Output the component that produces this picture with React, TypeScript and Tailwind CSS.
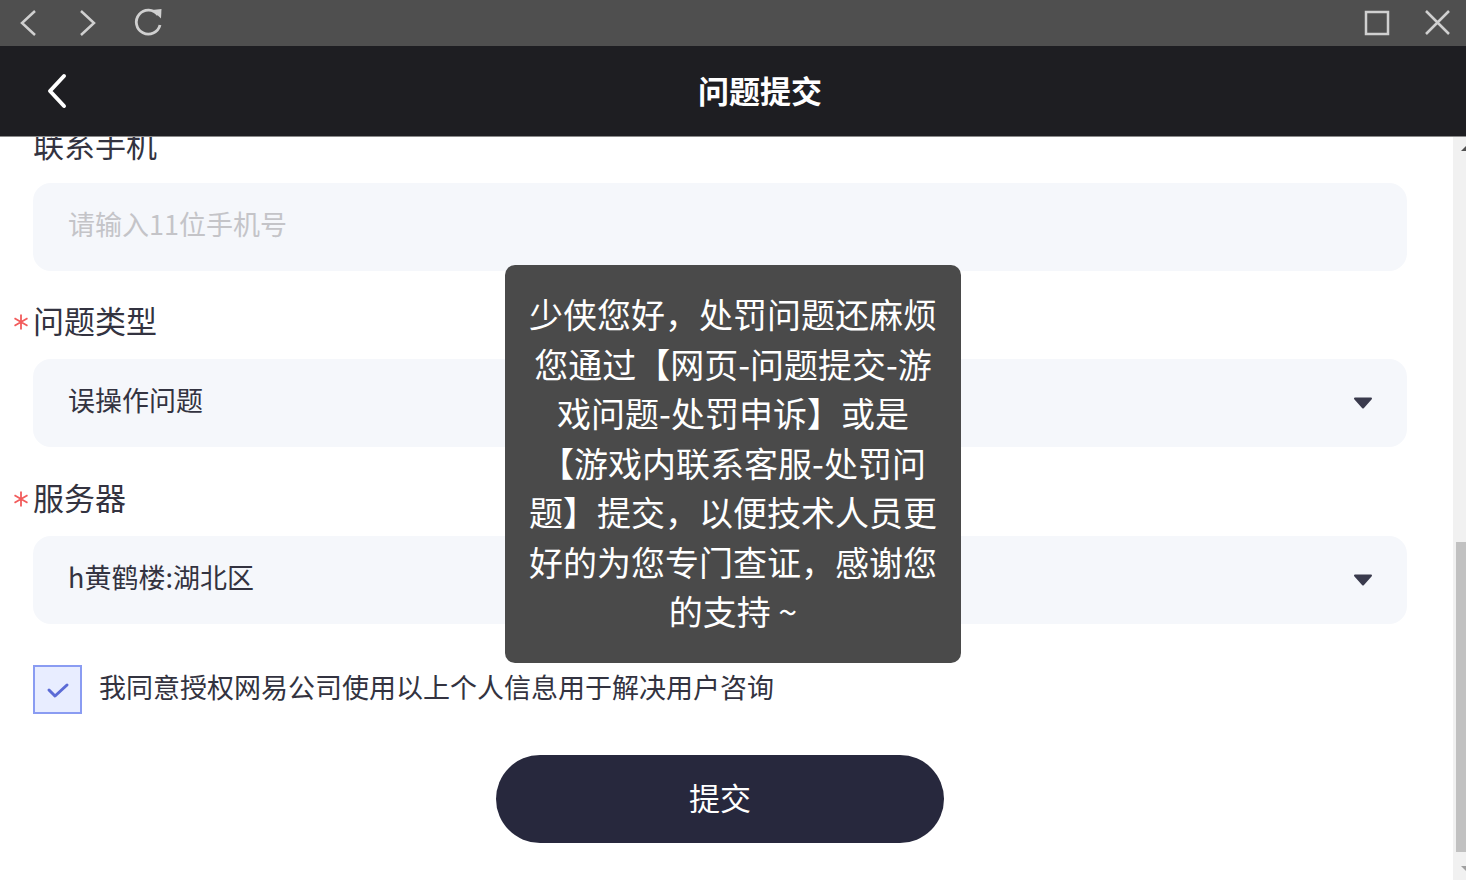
import React from "react";

const font = { fontFamily: '"Noto Sans CJK SC", "Noto Sans", sans-serif' };

function Caret() {
  return (
    <svg width="20" height="12" viewBox="0 0 20 12">
      <path d="M2 1.5 L18 1.5 L10 10.5 Z" fill="#3a3b4d" stroke="#3a3b4d" strokeWidth="2" strokeLinejoin="round" />
    </svg>
  );
}

function Label({ text, required }: { text: string; required?: boolean }) {
  return (
    <div className="flex items-center h-[44px] text-[31px] leading-[44px] text-[#333340]">
      {required && (
        <svg width="20" height="20" viewBox="0 0 20 20" className="-ml-[20px] mt-[4px]">
          <path d="M8 1.5 L8 16.5 M1.5 5.2 L14.5 12.8 M14.5 5.2 L1.5 12.8" stroke="#f25b5b" strokeWidth="1.8" fill="none" transform="translate(0 1)" />
        </svg>
      )}
      <span>{text}</span>
    </div>
  );
}

export default function App() {
  return (
    <div className="relative w-[1466px] h-[880px] overflow-hidden bg-white flex flex-col" style={font}>
      {/* window chrome */}
      <div className="h-[46px] shrink-0 bg-[#4f4f4f] flex items-center justify-between">
        <div className="flex items-center">
          <svg width="60" height="36" viewBox="0 0 60 36" className="-mt-[1px]">
            <polyline points="35,6 22,18 35,30" fill="none" stroke="#d0d0d0" strokeWidth="2.5" />
          </svg>
          <svg width="60" height="36" viewBox="0 0 60 36" className="-mt-[1px]">
            <polyline points="21,6 34,18 21,30" fill="none" stroke="#d0d0d0" strokeWidth="2.5" />
          </svg>
          <svg width="50" height="36" viewBox="0 0 50 36" className="-mt-[1px]">
            <path d="M38 10 A12 12 0 1 0 40 20" fill="none" stroke="#d0d0d0" strokeWidth="2.8" />
            <path d="M32 5 L41.5 4 L41 13.5 Z" fill="#d0d0d0" />
          </svg>
        </div>
        <div className="flex items-center">
          <svg width="60" height="36" viewBox="0 0 60 36" className="-mt-[1px]">
            <rect x="20" y="7" width="22" height="22" fill="none" stroke="#d0d0d0" strokeWidth="2.5" />
          </svg>
          <svg width="60" height="36" viewBox="0 0 60 36" className="-mt-[1px]">
            <path d="M20 6 L43 29 M43 6 L20 29" fill="none" stroke="#d0d0d0" strokeWidth="2.5" />
          </svg>
        </div>
      </div>

      {/* app header */}
      <div className="h-[91px] shrink-0 bg-[#1e1e22] border-b border-[#8a8a8a] flex items-center">
        <div className="w-[100px] pl-[44px] flex items-center">
          <svg width="28" height="36" viewBox="0 0 28 36">
            <polyline points="20,3 6,18 20,33" fill="none" stroke="#ffffff" strokeWidth="4" strokeLinecap="round" strokeLinejoin="round" />
          </svg>
        </div>
        <div className="flex-1 text-center text-white text-[31px] font-bold leading-[40px] -mt-[3px]">问题提交</div>
        <div className="w-[46px]" />
      </div>

      {/* content */}
      <div className="flex-1 flex min-h-0">
        <div className="flex-1 overflow-hidden">
          <div className="-mt-[15px] pl-[33px] pr-[46px] flex flex-col">
            <Label text="联系手机" />
            <div className="mt-[17px] h-[88px] rounded-[18px] bg-[#f5f7fb] flex items-center pl-[35px] pb-[5px] text-[27px] text-[#c4c4c8]">
              请输入11位手机号
            </div>

            <div className="mt-[27px]">
              <Label text="问题类型" required />
            </div>
            <div className="mt-[17px] h-[88px] rounded-[18px] bg-[#f5f7fb] flex items-center justify-between pl-[35px] pr-[34px] text-[27px] text-[#333340]">
              <span className="-mt-[5px]">误操作问题</span>
              <Caret />
            </div>

            <div className="mt-[28px]">
              <Label text="服务器" required />
            </div>
            <div className="mt-[17px] h-[88px] rounded-[18px] bg-[#f5f7fb] flex items-center justify-between pl-[35px] pr-[34px] text-[27px] text-[#333340]">
              <span className="-mt-[5px]">h黄鹤楼:湖北区</span>
              <Caret />
            </div>

            <div className="mt-[41px] flex items-center">
              <div className="w-[49px] h-[49px] border-2 border-[#8a9cf2] bg-[#e8edff] flex items-center justify-center">
                <svg width="30" height="30" viewBox="0 0 30 30">
                  <polyline points="6,15 12,21 24,10" fill="none" stroke="#5b6bd6" strokeWidth="3" strokeLinecap="round" strokeLinejoin="round" />
                </svg>
              </div>
              <span className="ml-[17px] text-[27px] text-[#333340] -mt-[5px]">我同意授权网易公司使用以上个人信息用于解决用户咨询</span>
            </div>

            <div className="mt-[41px] flex justify-center">
              <div className="w-[448px] h-[88px] rounded-full bg-[#27283d] flex items-center justify-center text-white text-[31px]">
                <span className="-mt-[3px]">提交</span>
              </div>
            </div>
          </div>
        </div>

        {/* scrollbar */}
        <div className="w-[13px] bg-[#f1f1f1] flex flex-col items-center justify-between">
          <svg width="13" height="14" viewBox="0 0 13 14" className="mt-[6px]">
            <path d="M8 8 L13 8 L13 3 Z" fill="#505050" />
          </svg>
          <div className="w-[10px] ml-[3px] h-[310px] bg-[#c1c1c1] mt-auto mb-[12px]" />
          <svg width="13" height="10" viewBox="0 0 13 10" className="mb-[6px]">
            <path d="M8 2 L13 2 L13 7 Z" fill="#a0a0a0" />
          </svg>
        </div>
      </div>

      {/* toast */}
      <div className="absolute left-[505px] top-[265px] w-[456px] h-[398px] rounded-[10px] bg-[#4a4a4a] px-[12px] pt-[24px] text-white text-[34px] leading-[49.5px] text-center whitespace-nowrap">
        少侠您好，处罚问题还麻烦
        <br />
        您通过【网页-问题提交-游
        <br />
        戏问题-处罚申诉】或是
        <br />
        【游戏内联系客服-处罚问
        <br />
        题】提交，以便技术人员更
        <br />
        好的为您专门查证，感谢您
        <br />
        的支持 ~
      </div>
    </div>
  );
}
